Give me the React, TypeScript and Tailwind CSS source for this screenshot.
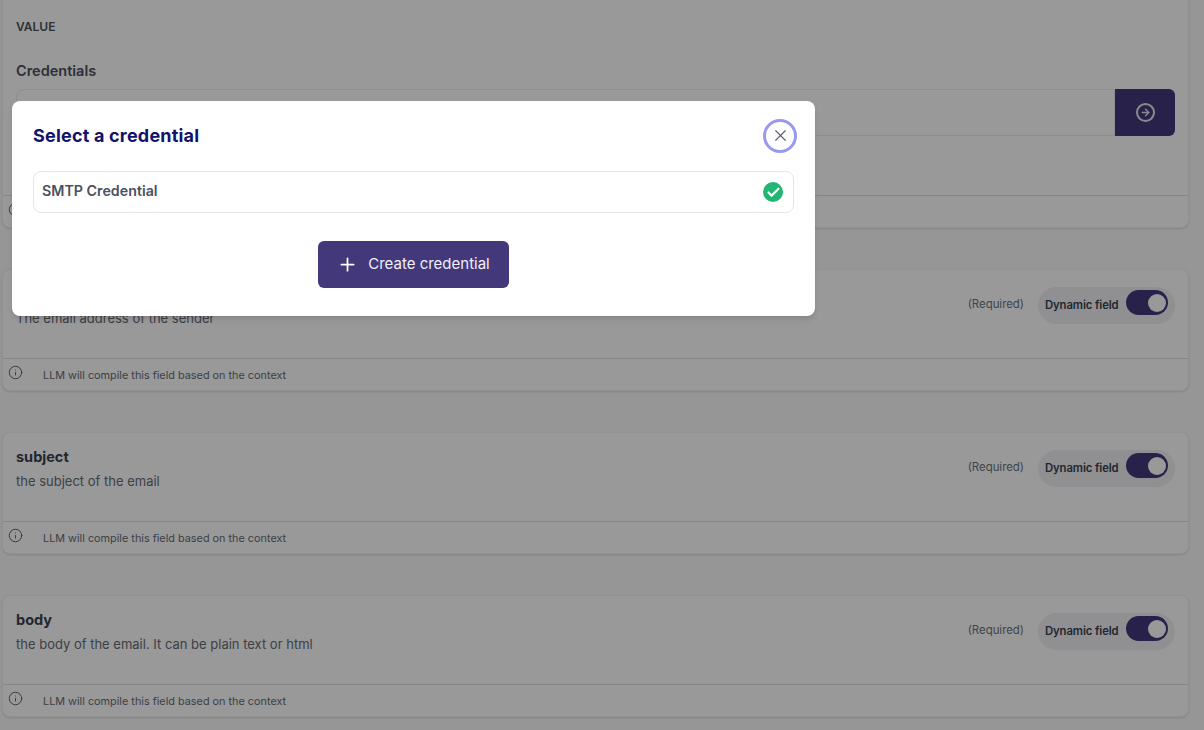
import { ArrowRight, Info, Plus, X, Check } from 'lucide-react';

const fields = [
  { name: 'from', description: 'The email address of the sender' },
  { name: 'subject', description: 'the subject of the email' },
  { name: 'body', description: 'the body of the email. It can be plain text or html' },
];

function CardFooter() {
  return (
    <div className="relative h-[32px] border-t border-[#dcdce4]">
      <Info size={15} strokeWidth={1.5} className="absolute left-[5px] top-[6px] text-[#555b66]" />
      <p className="pl-[40px] pt-[9px] text-[10.85px] leading-[14px] text-[#666b76]">
        LLM will compile this field based on the context
      </p>
    </div>
  );
}

function FieldCard({ name, description }: { name: string; description: string }) {
  return (
    <div className="h-[122px] rounded-lg border border-[#f3f3f6] bg-white shadow-sm flex flex-col">
      <div className="flex-1 flex justify-between pl-[13px] pr-[13px] pt-[14px]">
        <div>
          <h3 className="text-[14.5px] leading-5 font-bold text-[#374151]">{name}</h3>
          <p className="mt-[4px] text-[13px] leading-5 text-[#666b76]">{description}</p>
        </div>
        <div className="flex items-start gap-[14px] pt-[3px]">
          <span className="pt-[9px] text-[11.4px] leading-4 text-[#6b7280]">(Required)</span>
          <div className="flex h-[37px] w-[137px] items-center justify-between rounded-full bg-[#f0f0f3] pl-[7px] pr-[7px]">
            <span className="text-[11.3px] font-semibold text-[#374151] tracking-[-0.1px] mb-[1px]">Dynamic field</span>
            <span className="flex h-[25px] w-[42px] items-center justify-end rounded-full bg-[#43387a] pr-[2px] mb-[6px]">
              <span className="h-[18px] w-[18px] rounded-full bg-white" />
            </span>
          </div>
        </div>
      </div>
      <CardFooter />
    </div>
  );
}

export default function App() {
  return (
    <div className="relative h-[730px] w-[1204px] overflow-hidden bg-[#fbfbfc] font-['Inter','Liberation_Sans',sans-serif]">
      <div className="-mt-[20px] ml-[2px] w-[1187px] flex flex-col gap-[41px]">
        <div className="h-[248px] rounded-lg border border-[#f3f3f6] bg-white shadow-sm flex flex-col">
          <div className="flex-1 pl-[13px] pt-[38px]">
            <p className="text-[12px] leading-4 font-semibold text-[#4b5160]">VALUE</p>
            <p className="mt-[26px] text-[14.5px] leading-5 font-semibold text-[#4b5160]">Credentials</p>
            <div className="mt-[8px] flex h-[47px] w-[1159px]">
              <div className="flex-1 rounded-l-lg border border-[#ececf1] bg-white" />
              <button className="flex w-[60px] items-center justify-center rounded-r-md bg-[#43387a]">
                <span className="flex h-[19px] w-[19px] items-center justify-center rounded-full border-2 border-[#e5e5ea]">
                  <ArrowRight size={11} strokeWidth={3} className="text-[#e5e5ea]" />
                </span>
              </button>
            </div>
          </div>
          <CardFooter />
        </div>
        {fields.map((f) => (
          <FieldCard key={f.name} name={f.name} description={f.description} />
        ))}
      </div>

      <div className="absolute inset-0 bg-black/40" />

      <div className="absolute left-[12px] top-[101px] h-[215px] w-[803px] rounded-lg bg-white px-[21px] pt-[18px] shadow-md">
        <div className="flex h-[33px] items-center justify-between">
          <h2 className="text-[18px] font-bold tracking-[0.2px] text-[#12126b]">Select a credential</h2>
          <button className="-mr-[3px] flex h-[34px] w-[34px] shrink-0 items-center justify-center rounded-full border-[3px] border-[#9999f2]">
            <X size={19} strokeWidth={1.5} className="text-[#5f6370]" />
          </button>
        </div>
        <div className="mt-[19px] flex h-[42px] items-center justify-between rounded-lg border border-[#e5e5ec] pl-[8px] pr-[10px]">
          <span className="mb-[2px] text-[14.25px] font-semibold text-[#4b5160]">SMTP Credential</span>
          <span className="flex h-5 w-5 items-center justify-center rounded-full bg-[#22b573]">
            <Check size={15} strokeWidth={3.5} className="text-white" />
          </span>
        </div>
        <div className="mt-[28px] flex justify-center">
          <button className="flex h-[47px] w-[191px] items-center justify-center gap-[10px] rounded-md bg-[#43387a] text-[15px] text-[#f1eff8]">
            <Plus size={21} strokeWidth={2} className="text-white" />
            Create credential
          </button>
        </div>
      </div>
    </div>
  );
}
